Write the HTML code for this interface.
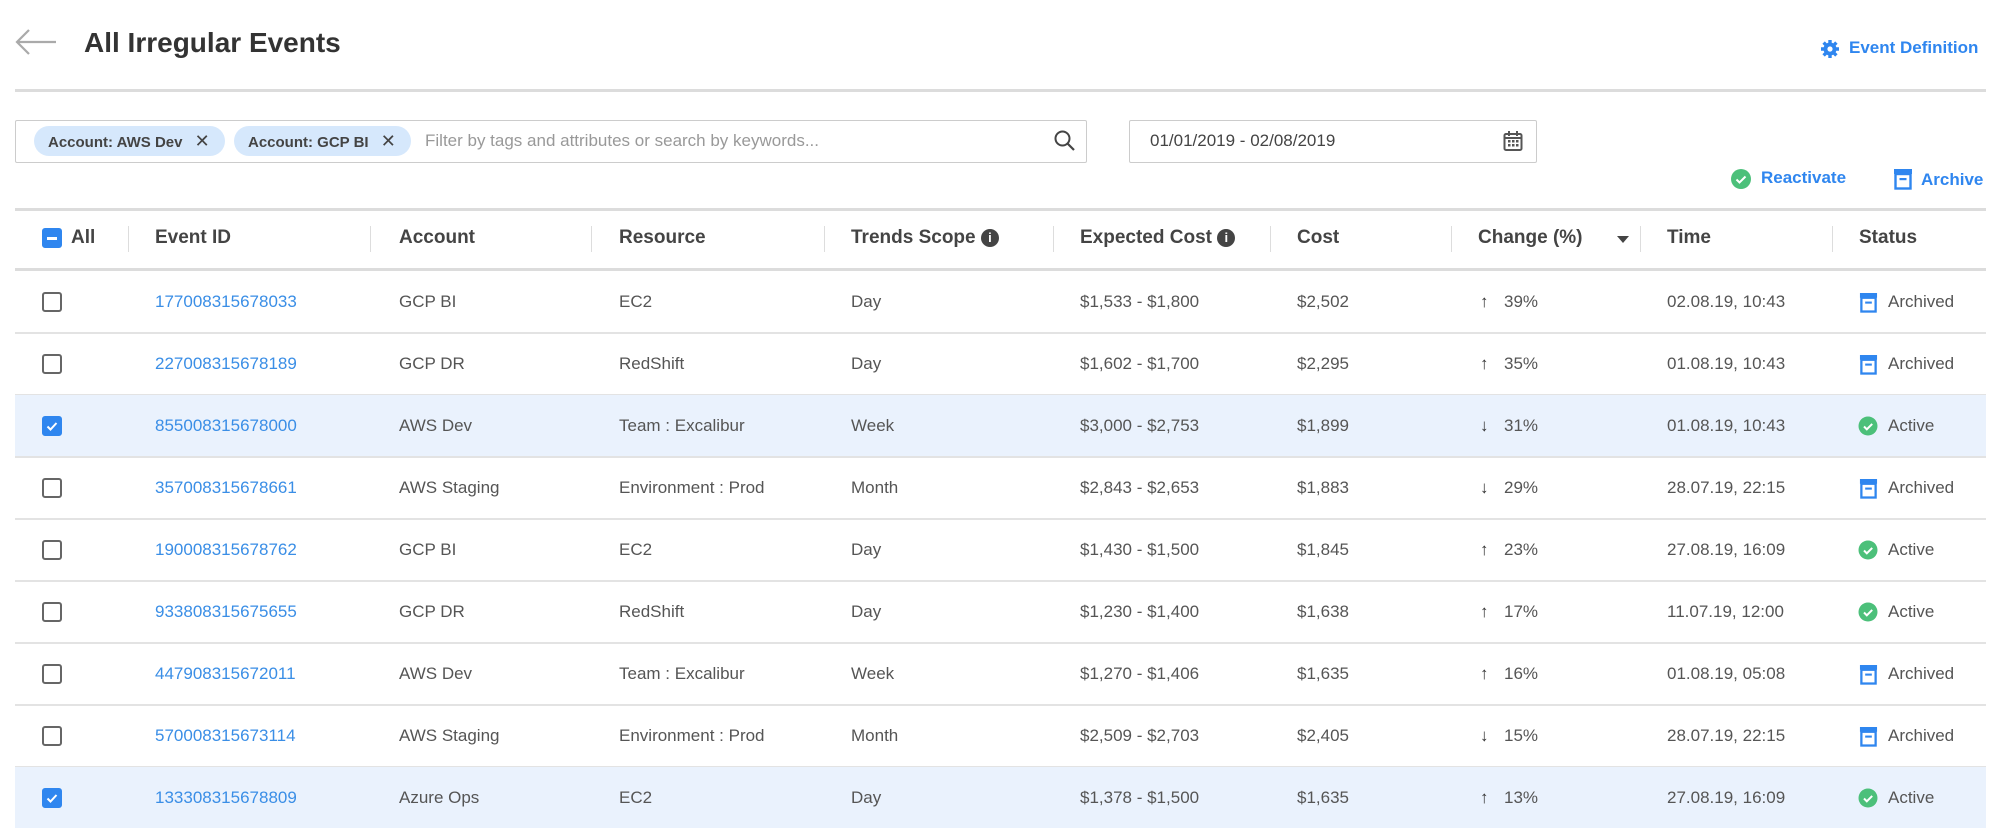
<!DOCTYPE html>
<html><head><meta charset="utf-8"><style>
*{box-sizing:border-box;margin:0;padding:0}
body{width:1994px;height:827px;background:#fff;font-family:"Liberation Sans",sans-serif;color:#555;position:relative;overflow:hidden}
.a{position:absolute;white-space:nowrap}
.hl{position:absolute;left:15px;width:1971px;height:3px;background:#dcdcdc}
.rl{position:absolute;left:15px;width:1971px;height:2px;background:#e3e3e3}
.sel{position:absolute;left:15px;width:1971px;background:#eaf2fd}
.h{font-size:19px;font-weight:bold;color:#444;top:227px}
.sep{position:absolute;top:226px;width:1px;height:26px;background:#ddd}
.c{font-size:17px;color:#555}
.id{color:#3a8ee6}
.cb{position:absolute;left:42px;width:20px;height:20px;border:2px solid #666;border-radius:3px;background:#fff}
.cb.on{background:#2f86ef;border-color:#2f86ef}
.chip{position:absolute;top:126px;height:30px;border-radius:15px;background:#d6e8fc;font-size:15px;font-weight:bold;color:#444;line-height:30px;padding-left:14px}
</style></head><body>
<svg class="a" style="left:14px;top:28px" width="44" height="28" viewBox="0 0 44 28"><path d="M42 14H3M15 2L3 14l12 12" fill="none" stroke="#aaa" stroke-width="2.2"/></svg>
<div class="a" style="left:84px;top:27px;font-size:28px;font-weight:bold;color:#333">All Irregular Events</div>
<svg class="a" style="left:1820px;top:39px" width="20" height="20" viewBox="0 0 20 20"><circle cx="10" cy="10" r="6.5" fill="#2f86ef"/><g stroke="#2f86ef" stroke-width="3.4"><path d="M10 1v18M1 10h18M3.6 3.6l12.8 12.8M16.4 3.6L3.6 16.4"/></g><circle cx="10" cy="10" r="2.6" fill="#fff"/></svg>
<div class="a" style="left:1849px;top:38px;font-size:17px;font-weight:bold;color:#2f86ef">Event Definition</div>
<div class="hl" style="top:89px"></div>
<div class="a" style="left:15px;top:120px;width:1072px;height:43px;border:1px solid #ccc;border-radius:2px"></div>
<div class="chip" style="left:34px;width:191px">Account: AWS Dev <span style="margin-left:8px;font-weight:normal;font-size:18px">✕</span></div>
<div class="chip" style="left:234px;width:177px">Account: GCP BI <span style="margin-left:8px;font-weight:normal;font-size:18px">✕</span></div>
<div class="a" style="left:425px;top:131px;font-size:17px;color:#999">Filter by tags and attributes or search by keywords...</div>
<svg class="a" style="left:1053px;top:129px" width="24" height="24" viewBox="0 0 24 24"><circle cx="9.5" cy="9.5" r="7" fill="none" stroke="#444" stroke-width="2"/><path d="M14.5 14.5L21 21" stroke="#444" stroke-width="2.2"/></svg>
<div class="a" style="left:1129px;top:120px;width:408px;height:43px;border:1px solid #ccc;border-radius:2px"></div>
<div class="a" style="left:1150px;top:131px;font-size:17px;color:#444">01/01/2019 - 02/08/2019</div>
<svg class="a" style="left:1503px;top:130px" width="20" height="22" viewBox="0 0 20 22"><rect x="1.5" y="4" width="17" height="16" rx="1.5" fill="none" stroke="#555" stroke-width="2"/><path d="M2 8h16" stroke="#555" stroke-width="2"/><path d="M6 1v5M14 1v5" stroke="#555" stroke-width="2"/><g fill="#555"><rect x="5" y="10" width="2.5" height="2.5"/><rect x="9" y="10" width="2.5" height="2.5"/><rect x="13" y="10" width="2.5" height="2.5"/><rect x="5" y="14" width="2.5" height="2.5"/><rect x="9" y="14" width="2.5" height="2.5"/><rect x="13" y="14" width="2.5" height="2.5"/></g></svg>
<svg class="a" style="left:1730px;top:168px" width="22" height="22" viewBox="0 0 22 22"><circle cx="11" cy="11" r="10" fill="#4cc07a"/><path d="M6.5 11.5l3 3 6-6" fill="none" stroke="#fff" stroke-width="2"/></svg>
<div class="a" style="left:1761px;top:168px;font-size:17px;font-weight:bold;color:#2f86ef">Reactivate</div>
<svg class="a" style="left:1893px;top:168px" width="20" height="22" viewBox="0 0 20 22"><rect x="1" y="1" width="18" height="5" fill="#2f86ef"/><rect x="2.5" y="6" width="15" height="14.5" fill="none" stroke="#2f86ef" stroke-width="2.4"/><rect x="6.5" y="10" width="7" height="2.2" fill="#2f86ef"/></svg>
<div class="a" style="left:1921px;top:170px;font-size:17px;font-weight:bold;color:#2f86ef">Archive</div>
<div class="hl" style="top:208px"></div>
<div class="hl" style="top:268px"></div>
<div class="cb on" style="top:228px"><div style="position:absolute;left:3px;top:7px;width:10px;height:3px;background:#fff"></div></div>
<div class="a h" style="left:71px">All</div>
<div class="a h" style="left:155px">Event ID</div>
<div class="a h" style="left:399px">Account</div>
<div class="a h" style="left:619px">Resource</div>
<div class="a h" style="left:851px">Trends Scope <span style="display:inline-block;width:18px;height:18px;border-radius:9px;background:#444;color:#fff;font-size:13px;text-align:center;line-height:18px;vertical-align:1px">i</span></div>
<div class="a h" style="left:1080px">Expected Cost <span style="display:inline-block;width:18px;height:18px;border-radius:9px;background:#444;color:#fff;font-size:13px;text-align:center;line-height:18px;vertical-align:1px">i</span></div>
<div class="a h" style="left:1297px">Cost</div>
<div class="a h" style="left:1478px">Change (%)</div>
<div class="a" style="left:1617px;top:236px;width:0;height:0;border-left:6px solid transparent;border-right:6px solid transparent;border-top:7px solid #444"></div>
<div class="a h" style="left:1667px">Time</div>
<div class="a h" style="left:1859px">Status</div>
<div class="sep" style="left:128px"></div><div class="sep" style="left:370px"></div><div class="sep" style="left:591px"></div><div class="sep" style="left:824px"></div><div class="sep" style="left:1053px"></div><div class="sep" style="left:1270px"></div><div class="sep" style="left:1451px"></div><div class="sep" style="left:1640px"></div><div class="sep" style="left:1832px"></div>
<div id="rows"></div>
<script>
(function(){
var d=[["177008315678033","GCP BI","EC2","Day","$1,533 - $1,800","$2,502","↑","39%","02.08.19, 10:43",0,0],
["227008315678189","GCP DR","RedShift","Day","$1,602 - $1,700","$2,295","↑","35%","01.08.19, 10:43",0,0],
["855008315678000","AWS Dev","Team : Excalibur","Week","$3,000 - $2,753","$1,899","↓","31%","01.08.19, 10:43",1,1],
["357008315678661","AWS Staging","Environment : Prod","Month","$2,843 - $2,653","$1,883","↓","29%","28.07.19, 22:15",0,0],
["190008315678762","GCP BI","EC2","Day","$1,430 - $1,500","$1,845","↑","23%","27.08.19, 16:09",1,0],
["933808315675655","GCP DR","RedShift","Day","$1,230 - $1,400","$1,638","↑","17%","11.07.19, 12:00",1,0],
["447908315672011","AWS Dev","Team : Excalibur","Week","$1,270 - $1,406","$1,635","↑","16%","01.08.19, 05:08",0,0],
["570008315673114","AWS Staging","Environment : Prod","Month","$2,509 - $2,703","$2,405","↓","15%","28.07.19, 22:15",0,0],
["133308315678809","Azure Ops","EC2","Day","$1,378 - $1,500","$1,635","↑","13%","27.08.19, 16:09",1,1]];
var h="",y0=271,H=62;
var act='<svg class="a" style="left:1858px;top:TPpx" width="20" height="20" viewBox="0 0 20 20"><circle cx="10" cy="10" r="9.5" fill="#4cc07a"/><path d="M6 10.5l2.8 2.8 5.4-5.4" fill="none" stroke="#fff" stroke-width="2"/></svg>';
var arc='<svg class="a" style="left:1859px;top:TPpx" width="19" height="21" viewBox="0 0 20 22"><rect x="1" y="1" width="18" height="5" fill="#2f86ef"/><rect x="2.5" y="6" width="15" height="14.5" fill="none" stroke="#2f86ef" stroke-width="2.4"/><rect x="6.5" y="10" width="7" height="2.2" fill="#2f86ef"/></svg>';
d.forEach(function(r,i){var y=y0+i*H,cy=y+H/2;
if(r[10])h+='<div class="sel" style="top:'+y+'px;height:'+(H-1)+'px"></div>';
if(i<8)h+='<div class="rl" style="top:'+(y+H-1)+'px"></div>';
h+='<div class="cb'+(r[10]?' on':'')+'" style="top:'+(cy-10)+'px">'+(r[10]?'<svg width="16" height="16" viewBox="0 0 16 16" style="position:absolute;left:0;top:0"><path d="M3.5 8.5l3 3 6-6.5" fill="none" stroke="#fff" stroke-width="2"/></svg>':'')+'</div>';
var t=cy-10;
function c(x,s,cl){h+='<div class="a c '+(cl||'')+'" style="left:'+x+'px;top:'+t+'px">'+s+'</div>';}
c(155,r[0],'id');c(399,r[1]);c(619,r[2]);c(851,r[3]);c(1080,r[4]);c(1297,r[5]);
c(1480,'<b style="color:#333">'+r[6]+'</b>');c(1504,r[7]);c(1667,r[8]);
h+=(r[9]?act:arc).replace('TP',cy-10);c(1888,r[9]?'Active':'Archived');
});
document.getElementById('rows').innerHTML=h;
})();
</script>
</body></html>
